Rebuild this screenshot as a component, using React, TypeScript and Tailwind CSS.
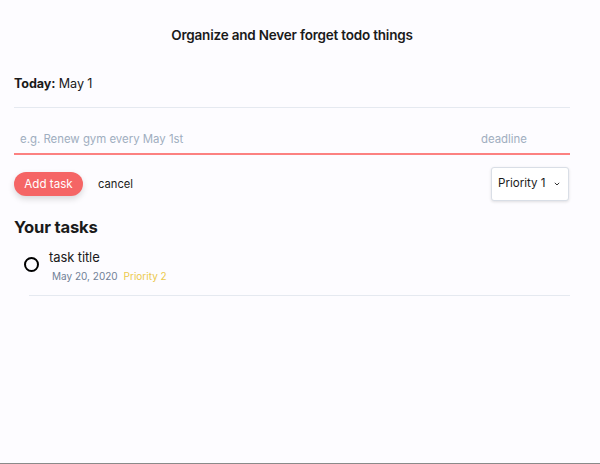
import React from "react";

export default function App() {
  return (
    <div className="w-[600px] h-[464px] bg-[#fdfcff] border-b border-[#8a8a8a] text-[#1a1a1a] font-['Inter','Liberation_Sans',sans-serif] overflow-hidden">
      <div className="ml-[14px] w-[556px] flex flex-col">
        <h1 className="mt-[27px] text-center text-[13.5px] font-semibold leading-[16px] tracking-[-0.2px]">
          Organize and Never forget todo things
        </h1>
        <div className="mt-[32px] text-[12.6px] leading-[17px] tracking-[-0.1px]">
          <span className="font-bold">Today:</span> May 1
        </div>
        <div className="mt-[15px] h-px bg-[#e5e9f0]" />
        <div className="mt-[23px] flex items-center justify-between px-[6px] text-[11.4px] leading-[16px] text-[#a0aec0]">
          <span>e.g. Renew gym every May 1st</span>
          <span className="mr-[37px]">deadline</span>
        </div>
        <div className="mt-[6px] h-[2px] bg-[#fc8181]" />
        <div className="mt-[12px] flex items-center justify-between">
          <div className="flex items-center mt-[-1px]">
            <button className="h-[24px] w-[69px] rounded-full bg-[#f56565] text-white text-[11.6px] leading-[16px] shadow-[0_3px_6px_rgba(0,0,0,0.15)]">
              Add task
            </button>
            <span className="ml-[15px] text-[11.2px] leading-[16px] text-[#222]">cancel</span>
          </div>
          <div className="mr-[1px] h-[34px] w-[78px] flex items-center justify-between pl-[6px] pr-[8px] rounded-[3px] border border-[#d9dee6] bg-white shadow-[0_1px_3px_rgba(0,0,0,0.12)] text-[11.6px]">
            <span>Priority 1</span>
            <svg width="6" height="4" viewBox="0 0 6 4" className="mb-[1px]">
              <path d="M0.8 0.8 L3 3 L5.2 0.8" stroke="#333" strokeWidth="1" fill="none" />
            </svg>
          </div>
        </div>
        <h2 className="mt-[15px] text-[16.6px] font-bold leading-[22px] tracking-[-0.2px]">Your tasks</h2>
        <div className="mt-[10px] flex items-start">
          <div className="ml-[10px] mt-[9px] w-[15px] h-[15px] rounded-full border-2 border-black" />
          <div className="ml-[10px] flex flex-col">
            <span className="text-[13px] leading-[18px] tracking-[-0.1px]">task title</span>
            <div className="mt-[3px] ml-[3px] flex gap-[6px] text-[10px] leading-[14px]">
              <span className="text-[#718096]">May 20, 2020</span>
              <span className="text-[#ecc94b]">Priority 2</span>
            </div>
          </div>
        </div>
        <div className="mt-[12px] ml-[15px] h-px bg-[#e5e9f0]" />
      </div>
    </div>
  );
}
